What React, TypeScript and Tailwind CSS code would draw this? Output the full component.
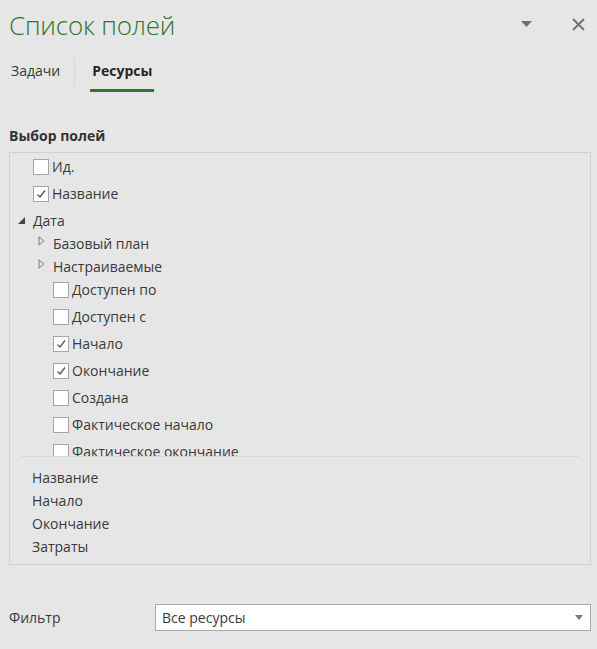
import React from 'react';

const font = { fontFamily: '"Open Sans", "Noto Sans", sans-serif' };

function Box({ checked }: { checked?: boolean }) {
  return (
    <span className="w-4 h-4 border border-[#a6a6a6] bg-white flex items-center justify-center shrink-0">
      {checked && (
        <svg width="12" height="12" viewBox="0 0 12 12">
          <path d="M2.5 6.5 L5 9 L10 2.5" fill="none" stroke="#5a5a5a" strokeWidth="1.4" />
        </svg>
      )}
    </span>
  );
}

function CheckRow({ label, checked, level }: { label: string; checked?: boolean; level: number }) {
  return (
    <div className={`h-[27px] flex items-center gap-[3px] ${level === 1 ? 'pl-[23px]' : 'pl-[43px]'}`}>
      <Box checked={checked} />
      <span className="whitespace-nowrap">{label}</span>
    </div>
  );
}

function TreeRow({ label, open }: { label: string; open?: boolean }) {
  return (
    <div className={`h-[23px] pt-[3px] flex items-center ${open ? 'pl-[7px]' : 'pl-[28px]'}`}>
      {open ? (
        <svg width="9" height="9" viewBox="0 0 9 9" className="mr-[7px]">
          <path d="M8 1 L8 8 L1 8 Z" fill="#444" />
        </svg>
      ) : (
        <svg width="7" height="10" viewBox="0 0 7 10" className="mr-[8px] -mt-[5px]">
          <path d="M1 0.8 L5.8 5 L1 9.2 Z" fill="none" stroke="#777" strokeWidth="1" />
        </svg>
      )}
      <span className="whitespace-nowrap">{label}</span>
    </div>
  );
}

export default function App() {
  return (
    <div className="w-[597px] h-[649px] bg-[#e6e6e6] text-[#3a3a3a] overflow-hidden relative" style={font}>
      {/* header */}
      <div className="flex items-center h-[52px] pl-[9px] pr-[12px]">
        <h1 className="text-[26px] font-light text-[#31752f] tracking-[-0.2px] leading-none -mt-[3px]">Список полей</h1>
        <div className="ml-auto flex items-center gap-[40px] -mt-[4px]">
          <svg width="11" height="6" viewBox="0 0 11 6">
            <path d="M0 0 H11 L5.5 6 Z" fill="#707070" />
          </svg>
          <svg width="13" height="13" viewBox="0 0 13 13">
            <path d="M1 1 L12 12 M12 1 L1 12" stroke="#707070" strokeWidth="1.8" />
          </svg>
        </div>
      </div>

      {/* tabs */}
      <div className="flex items-stretch h-[40px] text-[14px]">
        <div className="pl-[11px] pr-[14px] flex items-center pb-[3px]">Задачи</div>
        <div className="w-px bg-[#dadada] my-[5px]" />
        <div className="ml-[15px] flex flex-col">
          <div className="flex-1 flex items-center px-[2px] font-bold text-[#262626]">Ресурсы</div>
          <div className="h-[3px] bg-[#31752f]" />
        </div>
      </div>

      <div className="h-[37px]" />
      <div className="pl-[9px] text-[14px] font-bold text-[#333] leading-none h-[23px]">Выбор полей</div>

      {/* list box */}
      <div className="mx-[9px] w-[582px] h-[413px] border border-[#d0d0d0] flex flex-col text-[14px]">
        <div className="h-[303px] overflow-hidden">
          <CheckRow level={1} label="Ид." />
          <CheckRow level={1} label="Название" checked />
          <TreeRow label="Дата" open />
          <TreeRow label="Базовый план" />
          <TreeRow label="Настраиваемые" />
          <CheckRow level={2} label="Доступен по" />
          <CheckRow level={2} label="Доступен с" />
          <CheckRow level={2} label="Начало" checked />
          <CheckRow level={2} label="Окончание" checked />
          <CheckRow level={2} label="Создана" />
          <CheckRow level={2} label="Фактическое начало" />
          <CheckRow level={2} label="Фактическое окончание" />
        </div>
        <div className="mx-[10px] h-px bg-[#d9d9d9]" />
        <div className="pt-[9px] pl-[22px] flex flex-col">
          <div className="h-[23px] flex items-center">Название</div>
          <div className="h-[23px] flex items-center">Начало</div>
          <div className="h-[23px] flex items-center">Окончание</div>
          <div className="h-[23px] flex items-center">Затраты</div>
        </div>
      </div>

      {/* filter */}
      <div className="flex items-center mt-[39px] pl-[9px] text-[14px]">
        <span className="w-[146px]">Фильтр</span>
        <div className="w-[436px] h-[27px] bg-white border border-[#ababab] flex items-center pl-[6px] pr-[7px]">
          <span>Все ресурсы</span>
          <svg width="8" height="5" viewBox="0 0 8 5" className="ml-auto">
            <path d="M0 0 H8 L4 5 Z" fill="#7a7a7a" />
          </svg>
        </div>
      </div>
    </div>
  );
}
